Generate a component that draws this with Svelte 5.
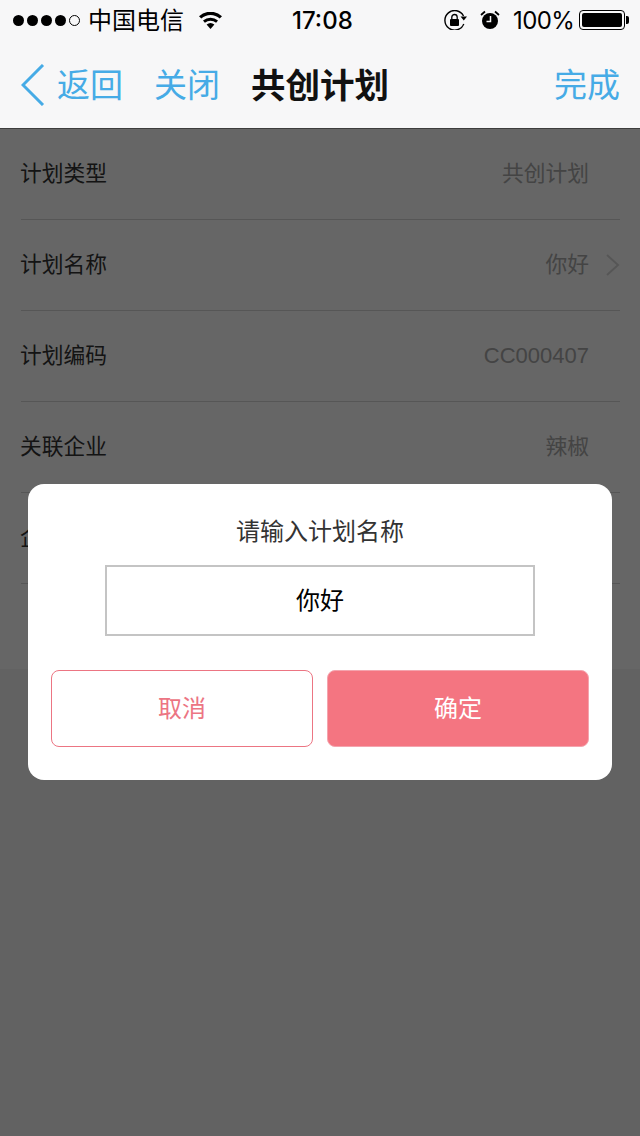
<script>
  const rows = [
    { label: '计划类型', value: '共创计划' },
    { label: '计划名称', value: '你好', arrow: true },
    { label: '计划编码', value: 'CC000407', code: true },
    { label: '关联企业', value: '辣椒' },
    { label: '企业名称', value: '' }
  ];
</script>

<div class="screen">
  <header class="top">
    <div class="status">
      <div class="signal">
        <i></i><i></i><i></i><i></i><i class="empty"></i>
      </div>
      <span class="carrier">中国电信</span>
      <svg class="wifi" viewBox="0 0 25 17" width="25" height="17">
        <path d="M12.500 17 8.600 12.600a6 6 0 0 1 7.800 0z" fill="#000" />
        <path d="M6.900 10.700 5 8.600a11.400 11.400 0 0 1 15 0l-1.900 2.100a8.600 8.600 0 0 0-11.200 0z" fill="#000" />
        <path d="M3.300 6.600 1 4.200a17 17 0 0 1 23 0l-2.300 2.400a13.800 13.800 0 0 0-18.400 0z" fill="#000" />
      </svg>
      <span class="time">17:08</span>
      <svg class="rotate" viewBox="0 0 24 20" width="24" height="20">
        <path d="M19.500 6A9.800 9.800 0 1 0 19.800 14" fill="none" stroke="#000" stroke-width="1.400" />
        <path d="M16.500 6.500h6.500l-3.200 4z" fill="#000" />
        <rect x="6" y="9" width="9" height="7" rx="1" fill="#000" />
        <path d="M7.800 9V7.200a2.700 2.700 0 0 1 5.400 0V9" fill="none" stroke="#000" stroke-width="1.300" />
      </svg>
      <svg class="alarm" viewBox="0 0 20 20" width="20" height="20">
        <circle cx="10" cy="11" r="8" fill="#000" />
        <path d="M10.500 6v5.500H6.500" fill="none" stroke="#f7f7f8" stroke-width="1.500" />
        <path d="M1 5 5 1.500M19 5 15 1.500" stroke="#000" stroke-width="1.800" />
      </svg>
      <span class="percent">100%</span>
      <div class="battery"><b></b></div>
    </div>
    <nav class="bar">
      <svg class="back" viewBox="0 0 24 42" width="24" height="42">
        <path d="M22 1 2 21l20 20" fill="none" stroke="#46abe6" stroke-width="3" />
      </svg>
      <span class="link first">返回</span>
      <span class="link close">关闭</span>
      <span class="title">共创计划</span>
      <span class="link done">完成</span>
    </nav>
  </header>

  <main class="form">
    {#each rows as row}
      <div class="row">
        <span class="label">{row.label}</span>
        <span class="value" class:code={row.code}>{row.value}</span>
        <span class="slot">
          {#if row.arrow}
            <svg viewBox="0 0 14 22" width="14" height="22">
              <path d="M1 1l11 10L1 21" fill="none" stroke="#d8d8d8" stroke-width="2" />
            </svg>
          {/if}
        </span>
      </div>
    {/each}
    <div class="row last"></div>
  </main>

  <div class="mask">
    <div class="dialog">
      <p class="prompt">请输入计划名称</p>
      <div class="input">你好</div>
      <div class="actions">
        <button class="cancel">取消</button>
        <button class="ok">确定</button>
      </div>
    </div>
  </div>
</div>

<style>
  :global(body) {
    margin: 0;
    background: #f5f5f5;
  }

  .screen {
    position: relative;
    width: 640px;
    height: 1136px;
    overflow: hidden;
    font-family: "Noto Sans CJK SC", "Liberation Sans", sans-serif;
    color: #000;
  }

  .top {
    height: 128px;
    background: #f7f7f8;
    border-bottom: 1px solid #999;
  }

  .status {
    display: flex;
    align-items: center;
    height: 40px;
    padding-left: 13px;
  }

  .signal {
    display: flex;
    gap: 3px;
  }

  .signal i {
    width: 11px;
    height: 11px;
    border-radius: 50%;
    background: #000;
    box-sizing: border-box;
  }

  .signal i.empty {
    background: transparent;
    border: 1px solid #000;
  }

  .carrier {
    margin-left: 8px;
    padding-bottom: 2px;
    font-size: 24px;
    line-height: 38px;
  }

  .wifi {
    margin-left: 14px;
  }

  .time {
    margin-left: 69px;
    width: 66px;
    font-family: Inter, "Liberation Sans", sans-serif;
    font-size: 24px;
    font-weight: 500;
  }

  .rotate {
    margin-left: 86px;
  }

  .alarm {
    margin-left: 12px;
  }

  .percent {
    margin-left: 13px;
    font-family: Inter, "Liberation Sans", sans-serif;
    font-size: 24px;
    letter-spacing: -0.6px;
  }

  .battery {
    position: relative;
    box-sizing: border-box;
    width: 46px;
    height: 20px;
    margin-left: 5px;
    padding: 2px;
    border: 1px solid #000;
    border-radius: 4px;
  }

  .battery b {
    display: block;
    height: 100%;
    border-radius: 2px;
    background: #000;
  }

  .battery::after {
    content: "";
    position: absolute;
    right: -5px;
    top: 5px;
    width: 3px;
    height: 8px;
    border-radius: 0 2px 2px 0;
    background: #000;
  }

  .bar {
    box-sizing: border-box;
    display: flex;
    align-items: center;
    height: 88px;
    padding-left: 21px;
    padding-bottom: 3px;
  }

  .back {
    margin-top: 5px;
  }

  .link {
    font-size: 33px;
    line-height: 46px;
    color: #46abe6;
  }

  .first {
    margin-left: 12px;
  }

  .close {
    margin-left: 31px;
  }

  .title {
    margin-left: 31px;
    font-size: 34.5px;
    font-weight: 700;
    line-height: 46px;
    color: #111;
  }

  .done {
    margin-left: auto;
    margin-right: 20px;
  }

  .form {
    background: #fff;
    padding-left: 21px;
  }

  .row {
    display: flex;
    align-items: center;
    height: 90px;
    margin-right: 20px;
    border-bottom: 1px solid #d8d8d8;
    font-size: 21.75px;
  }

  .row.last {
    height: 85px;
    border-bottom: 0;
  }

  .label {
    margin-left: -1px;
    padding-bottom: 6px;
    color: #333;
  }

  .value {
    margin-left: auto;
    padding-bottom: 6px;
    font-family: "Liberation Sans", "Noto Sans CJK SC", sans-serif;
    color: #aaa;
  }

  .value.code {
    padding-bottom: 0;
    font-size: 22px;
  }

  .slot {
    display: flex;
    justify-content: flex-end;
    width: 31px;
  }

  .mask {
    position: absolute;
    left: 0;
    right: 0;
    top: 128px;
    bottom: 0;
    display: flex;
    align-items: center;
    justify-content: center;
    background: rgba(0, 0, 0, 0.6);
  }

  .dialog {
    box-sizing: border-box;
    display: flex;
    flex-direction: column;
    align-items: center;
    width: 584px;
    height: 296px;
    padding: 28px 23px 0;
    border-radius: 16px;
    background: #fff;
  }

  .prompt {
    margin: 0;
    font-size: 24px;
    line-height: 36px;
    color: #333;
  }

  .input {
    box-sizing: border-box;
    width: 430px;
    height: 71px;
    margin-top: 17px;
    border: 2px solid #c4c4c4;
    font-size: 24px;
    line-height: 63px;
    text-align: center;
  }

  .actions {
    display: flex;
    gap: 14px;
    width: 100%;
    margin-top: 34px;
  }

  .actions button {
    box-sizing: border-box;
    width: 262px;
    height: 77px;
    padding: 0 0 4px;
    border: 1px solid #f4a4ae;
    border-radius: 8px;
    font-family: inherit;
    font-size: 24px;
  }

  .cancel {
    background: #fff;
    color: #ec7583;
    border-color: #ec7583 !important;
  }

  .ok {
    background: #f47581;
    color: #fff;
  }
</style>
